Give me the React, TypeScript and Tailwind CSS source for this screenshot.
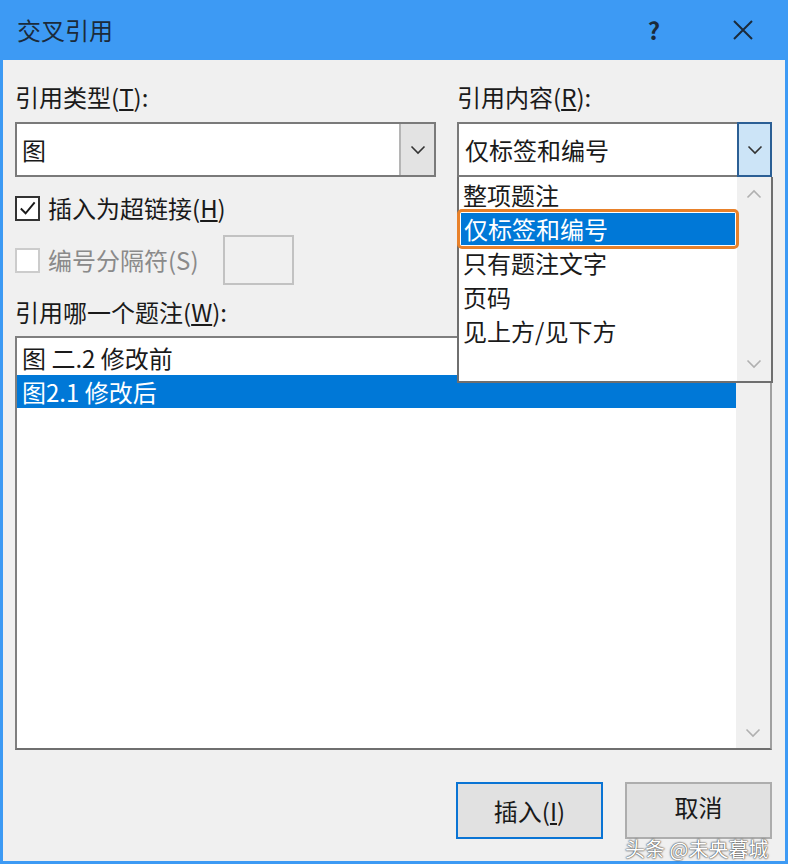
import { ReactNode } from 'react';

const fontCls = "font-['Microsoft_YaHei','Noto_Sans_CJK_SC',sans-serif]";

const Chevron = ({ up = false, color = '#333' }: { up?: boolean; color?: string }) => (
  <svg width="16" height="10" viewBox="0 0 16 10" className={up ? 'rotate-180' : ''}>
    <path d="M1.5 1.5 L8 8 L14.5 1.5" fill="none" stroke={color} strokeWidth="1.6" />
  </svg>
);

const Check = () => (
  <svg width="22" height="22" viewBox="0 0 22 22">
    <path d="M4 11.5 L9 16.5 L18.5 5" fill="none" stroke="#1a1a1a" strokeWidth="2" />
  </svg>
);

const Label = ({ children }: { children: ReactNode }) => (
  <div className="h-[28px] text-[24px] leading-[28px] text-[#1a1a1a]">{children}</div>
);

export default function App() {
  const popupItems = ['整项题注', '仅标签和编号', '只有题注文字', '页码', '见上方/见下方'];

  return (
    <div className={`relative w-[788px] h-[864px] overflow-hidden bg-[#3d9af4] ${fontCls}`}>
      {/* 标题栏 */}
      <div className="h-[60px] flex items-center pl-[17px] pr-[34px]">
        <span className="text-[24px] text-[#1b2a3a] flex-1">交叉引用</span>
        <span className="text-[24px] text-[#1b2a3a] font-bold mr-[72px]">?</span>
        <svg width="22" height="22" viewBox="0 0 22 22">
          <path d="M2 2 L20 20 M20 2 L2 20" stroke="#1b2a3a" strokeWidth="2" />
        </svg>
      </div>

      {/* 主体 */}
      <div className="ml-[3px] mr-[3px] h-[801px] bg-[#f0f0f0] pl-[12px] pr-[13px] pt-[23px] flex flex-col">
        <div className="flex gap-[21px]">
          <div className="w-[421px]">
            <Label>引用类型(<u>T</u>):</Label>
            <div className="mt-[11px] h-[55px] bg-white border-[2px] border-[#7a7a7a] flex">
              <div className="flex-1 flex items-center pl-[5px] text-[24px] text-[#1a1a1a]">图</div>
              <div className="w-[35px] bg-[#e3e3e3] border-l-[2px] border-[#b5b5b5] flex items-center justify-center">
                <Chevron />
              </div>
            </div>
          </div>
          <div className="w-[315px] relative">
            <Label>引用内容(<u>R</u>):</Label>
            <div className="mt-[11px] h-[55px] bg-white border-[2px] border-[#7a7a7a] flex">
              <div className="flex-1 flex items-center pl-[6px] text-[24px] text-[#1a1a1a]">仅标签和编号</div>
              <div className="w-[35px] bg-[#cce4f7] border-[2px] border-[#2b5f95] -my-[2px] -mr-[2px] flex items-center justify-center">
                <Chevron />
              </div>
            </div>
          </div>
        </div>

        {/* 复选框 */}
        <div className="mt-[16px] flex items-center h-[30px]">
          <div className="w-[25px] h-[25px] border-[2px] border-[#333] bg-white flex items-center justify-center">
            <Check />
          </div>
          <span className="ml-[8px] text-[24px] text-[#1a1a1a]">插入为超链接(<u>H</u>)</span>
        </div>
        <div className="mt-[12px] flex items-center h-[50px]">
          <div className="w-[25px] h-[25px] border-[2px] border-[#cccccc] bg-white" />
          <span className="ml-[8px] text-[24px] text-[#8a8a8a]">编号分隔符(S)</span>
          <div className="ml-[24px] w-[71px] h-[50px] border-[2px] border-[#c2c2c2] bg-[#f0f0f0]" />
        </div>

        <div className="mt-[13px]">
          <Label>引用哪一个题注(<u>W</u>):</Label>
        </div>

        {/* 题注列表 */}
        <div className="mt-[10px] h-[414px] bg-white border-[2px] border-[#7f7f7f] border-r-[#a0a0a0] border-b-[#6f6f6f] flex">
          <div className="flex-1 pt-[3px]">
            <div className="h-[34px] flex items-center pl-[5px] text-[24px] text-[#1a1a1a]">图 二.2 修改前</div>
            <div className="h-[33px] flex items-center pl-[5px] bg-[#0078d7] text-[24px] text-white">图2.1 修改后</div>
          </div>
          <div className="w-[34px] bg-[#f0f0f0] flex flex-col justify-end items-center pb-[10px]">
            <Chevron color="#b0b0b0" />
          </div>
        </div>

        {/* 按钮 */}
        <div className="mt-[32px] flex justify-end gap-[22px]">
          <button className="w-[147px] h-[57px] bg-[#e1e1e1] border-[2px] border-[#0a74d4] text-[24px] text-[#1a1a1a]">
            插入(<u>I</u>)
          </button>
          <button className="w-[147px] h-[57px] bg-[#e1e1e1] border-[2px] border-[#adadad] text-[24px] text-[#1a1a1a] pb-[8px]">
            取消
          </button>
        </div>
      </div>

      {/* 下拉列表 */}
      <div className="absolute left-[457px] top-[177px] w-[316px] h-[206px] bg-white border-[2px] border-[#6f6f6f] border-t-0 flex">
        <div className="flex-1 pt-[1px]">
          {popupItems.map((t, i) =>
            i === 1 ? (
              <div key={t} className="h-[40px] -my-[3px] border-[3px] border-[#e8812a] rounded-[5px] mx-[-2px] p-[1px] relative">
                <div className="h-full bg-[#0078d7] text-white text-[24px] flex items-center pl-[3px]">{t}</div>
              </div>
            ) : (
              <div key={t} className="h-[34px] flex items-center pl-[4px] text-[24px] text-[#1a1a1a]">{t}</div>
            )
          )}
        </div>
        <div className="w-[34px] bg-[#f0f0f0] flex flex-col justify-between items-center py-[12px]">
          <Chevron up color="#b0b0b0" />
          <Chevron color="#b0b0b0" />
        </div>
      </div>

      {/* 水印 */}
      <div className="absolute left-[625px] top-[834px] text-[20px] text-white [text-shadow:0_0_2px_#333,0_0_1px_#333]">
        头条 @未央暮城
      </div>
    </div>
  );
}
